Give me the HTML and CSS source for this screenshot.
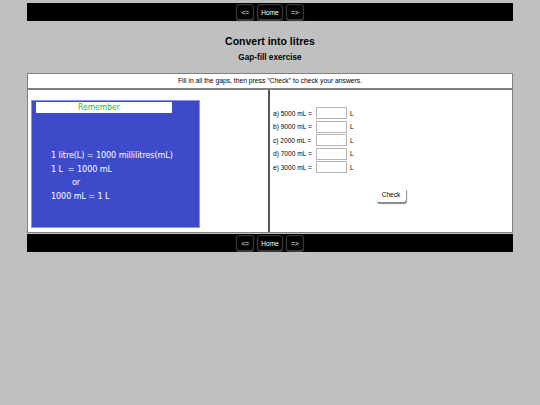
FILE: index.html
```html
<!DOCTYPE html>
<html>
<head>
<meta charset="utf-8">
<link rel="stylesheet" href="styles.css">
</head>
<body>
<div class="page">
  <div class="navbar">
    <span class="navbtn">&lt;=</span>
    <span class="navbtn">Home</span>
    <span class="navbtn">=&gt;</span>
  </div>
  <h1 class="title">Convert into litres</h1>
  <h2 class="subtitle">Gap-fill exercise</h2>
  <div class="exercise">
    <div class="instructions">Fill in all the gaps, then press "Check" to check your answers.</div>
    <div class="cells">
      <div class="left-cell">
        <div class="board">
          <div class="remember">Remember</div>
          <div class="facts">
            <div>1 litre(L) = 1000 millilitres(mL)</div>
            <div>1 L&nbsp; = 1000 mL</div>
            <div class="or">or</div>
            <div>1000 mL = 1 L</div>
          </div>
        </div>
      </div>
      <div class="right-cell">
        <div class="rows">
          <div class="row"><span class="q">a) 5000 mL =</span><span class="gap"></span><span class="unit">L</span></div>
          <div class="row"><span class="q">b) 9000 mL =</span><span class="gap"></span><span class="unit">L</span></div>
          <div class="row"><span class="q">c) 2000 mL =</span><span class="gap"></span><span class="unit">L</span></div>
          <div class="row"><span class="q">d) 7000 mL =</span><span class="gap"></span><span class="unit">L</span></div>
          <div class="row"><span class="q">e) 3000 mL =</span><span class="gap"></span><span class="unit">L</span></div>
        </div>
        <div class="check-wrap"><span class="check">Check</span></div>
      </div>
    </div>
  </div>
  <div class="navbar bottom">
    <span class="navbtn">&lt;=</span>
    <span class="navbtn">Home</span>
    <span class="navbtn">=&gt;</span>
  </div>
</div>
</body>
</html>
```
FILE: styles.css
```css
html, body {
  margin: 0;
  padding: 0;
  background: #c0c0c0;
  font-family: "Liberation Sans", Arial, sans-serif;
  color: #000;
}
.page {
  width: 486px;
  margin: 0 auto;
}
.navbar {
  margin-top: 3px;
  height: 18px;
  background: #000;
  display: flex;
  justify-content: center;
  align-items: flex-start;
  gap: 3px;
  padding-top: 1px;
  box-sizing: border-box;
}
.navbar.bottom {
  margin-top: 1px;
}
.navbtn {
  display: flex;
  align-items: center;
  justify-content: center;
  min-width: 18px;
  height: 16px;
  padding: 0 3px;
  box-sizing: border-box;
  border: 1px solid #3a3a3a;
  border-radius: 3px;
  background: #050505;
  color: #fff;
  font-size: 6.5px;
  box-shadow: 0 1px 1px #444;
}
.title {
  margin: 14px 0 0;
  font-size: 10.5px;
  font-weight: bold;
  text-align: center;
  line-height: 12px;
}
.subtitle {
  margin: 6px 0 0;
  font-size: 8.2px;
  font-weight: bold;
  text-align: center;
  line-height: 10px;
}
.exercise {
  margin-top: 10px;
  background: #fff;
  border: 1px solid #808080;
}
.instructions {
  height: 14px;
  line-height: 14px;
  font-size: 6.75px;
  text-align: center;
  border-bottom: 2px solid #808080;
}
.cells {
  display: flex;
  height: 142px;
}
.left-cell {
  width: 237px;
  border-right: 2px solid #555;
  padding: 10px 0 0 3px;
}
.board {
  width: 167px;
  height: 126px;
  background: #3d4bcb;
  border: 1px solid #8c93e6;
}
.remember {
  margin: 1px 0 0 4px;
  width: 136px;
  height: 11px;
  line-height: 11px;
  box-sizing: border-box;
  padding-right: 10px;
  background: #fff;
  color: #35b040;
  font-family: "DejaVu Sans", sans-serif;
  font-stretch: condensed;
  font-size: 8.5px;
  text-align: center;
}
.facts {
  margin: 36px 0 0 19px;
  color: #fff;
  font-family: "DejaVu Sans", sans-serif;
  font-stretch: condensed;
  font-size: 9px;
  line-height: 13.6px;
  letter-spacing: -0.1px;
}
.facts .or {
  padding-left: 21px;
}
.right-cell {
  flex: 1;
  display: flex;
  flex-direction: column;
  padding: 17px 0 0 3px;
}
.rows {
  display: flex;
  flex-direction: column;
  gap: 1.5px;
}
.row {
  display: flex;
  align-items: center;
  height: 12px;
  font-size: 6.6px;
}
.q {
  width: 43px;
}
.gap {
  width: 31px;
  height: 12px;
  box-sizing: border-box;
  border: 1px solid #b5b5b5;
  background: #fff;
}
.unit {
  margin-left: 3px;
}
.check-wrap {
  display: flex;
  justify-content: center;
  margin-top: 14px;
  padding-right: 3px;
}
.check {
  display: flex;
  align-items: center;
  justify-content: center;
  width: 30px;
  height: 15px;
  font-size: 6.6px;
  background: #fff;
  border-radius: 3px;
  box-shadow: 1px 2px 1px #888;
}
```
